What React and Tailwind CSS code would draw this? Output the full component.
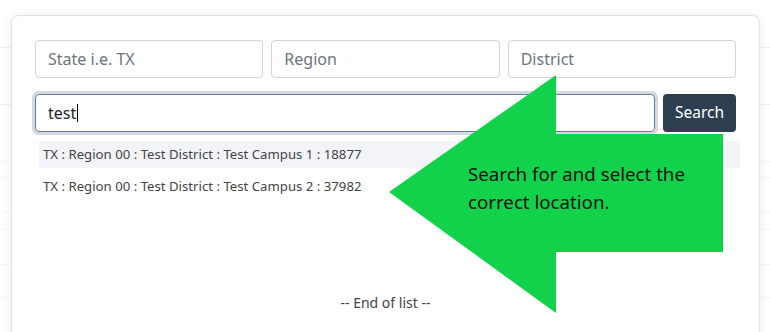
const rows = [
  'TX : Region 00 : Test District : Test Campus 1 : 18877',
  'TX : Region 00 : Test District : Test Campus 2 : 37982',
];

const inputCls =
  'h-[38px] w-full rounded border border-[#ced4da] bg-white px-3 text-[16px] text-[#212529] placeholder:text-[#6c757d] outline-none';

export default function App() {
  return (
    <div className="relative h-[332px] w-[770px] overflow-hidden bg-white font-['Noto_Sans',sans-serif]">
      {/* faint table behind the modal */}
      <div className="flex flex-col">
        <div className="h-[48px] border-b border-[#f0f0f0]" />
        <div className="h-[57px] border-b border-[#f0f0f0]" />
        <div className="h-[57px] border-b border-[#f6f6f6]" />
        <div className="h-[16px] border-b border-[#f6f6f6]" />
        <div className="h-[35px] border-b border-[#f6f6f6]" />
        <div className="h-[17px] border-b border-[#f6f6f6]" />
        <div className="h-[35px] border-b border-[#f6f6f6]" />
        <div className="h-[33px] border-b border-[#f6f6f6]" />
      </div>

      {/* modal card */}
      <div className="absolute left-[11px] top-[15px] h-[340px] w-[749px] rounded-lg border border-[#e3e3e3] bg-white shadow-[0_0_10px_rgba(0,0,0,0.08)]">
        <div className="px-[23px] pt-[24px]">
          <div className="grid grid-cols-3 gap-2">
            <input className={inputCls} placeholder="State i.e. TX" />
            <input className={inputCls} placeholder="Region" />
            <input className={inputCls} placeholder="District" />
          </div>
          <div className="mt-4 flex gap-2">
            <div className="flex h-[38px] flex-1 items-center rounded border border-[#5e7fa3] px-3 text-[16px] text-[#212529] shadow-[0_0_0_3px_#d5d8dc]">
              test<span className="ml-px h-[18px] w-px bg-black" />
            </div>
            <button className="h-[38px] w-[73px] rounded bg-[#2c3e50] text-[15.5px] text-white">
              Search
            </button>
          </div>
          <div className="ml-[4px] mr-[-4px] mt-[9px] flex flex-col gap-[5px]">
            {rows.map((r, i) => (
              <div
                key={r}
                className={`flex h-[27px] items-center px-[4px] text-[13.2px] text-[#444] ${i === 0 ? 'bg-[#f3f4f8]' : ''}`}
              >
                {r}
              </div>
            ))}
          </div>
          <div className="mt-[92px] text-center text-[14px] text-[#444]">-- End of list --</div>
        </div>
      </div>

      {/* green callout arrow */}
      <svg className="absolute left-0 top-0" width="770" height="332">
        <polygon
          points="389,192 556,75 556,134 723,134 723,252 556,252 556,313"
          fill="#12d14a"
        />
      </svg>
      <div className="absolute left-[468px] top-[160px] text-[18.7px] leading-[28px] text-[#111]">
        Search for and select the
        <br />
        correct location.
      </div>
    </div>
  );
}
